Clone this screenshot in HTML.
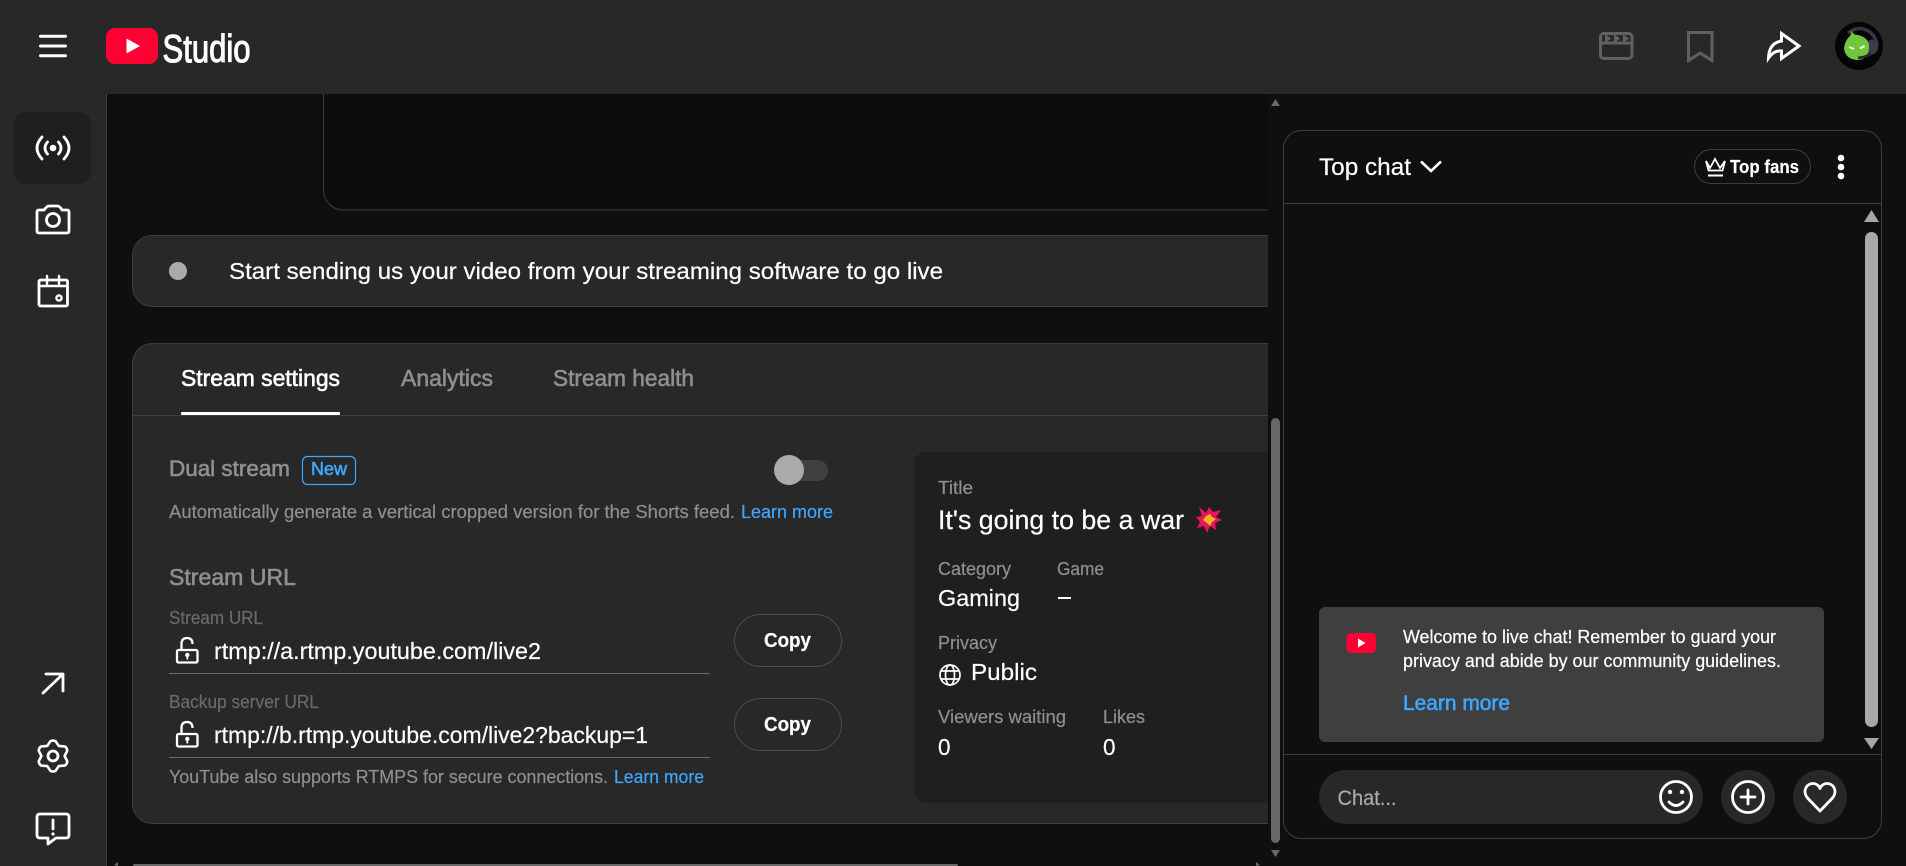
<!DOCTYPE html>
<html lang="en"><head><meta charset="utf-8"><title>YouTube Studio</title>
<style>
html,body{margin:0;padding:0;width:1906px;height:866px;overflow:hidden;background:#0f0f0f}
svg{display:block;position:absolute;left:0;top:0}
text{font-family:"Liberation Sans",sans-serif;white-space:pre;stroke-width:.2px}
.w{fill:#fff;stroke:#fff}.g{fill:#aaa;stroke:#aaa}.d{fill:#8f8f8f;stroke:#8f8f8f}.f{fill:#6a6a6a;stroke:#6a6a6a}.b{fill:#3ea6ff;stroke:#3ea6ff}
text.m{stroke-width:.6px}
.i{fill:none;stroke:#fff;stroke-width:2.8;stroke-linecap:round;stroke-linejoin:round}
</style></head><body>
<svg width="1906" height="866" viewBox="0 0 1906 866" xmlns="http://www.w3.org/2000/svg">
<defs><clipPath id="c"><rect x="107" y="94" width="1161" height="772"/></clipPath></defs>
<rect width="1906" height="866" fill="#0f0f0f"/>

<g clip-path="url(#c)">
<rect x="323.500" y="40" width="1100" height="170" rx="20" fill="#0d0d0d" stroke="#3e3e3e" stroke-width="1"/>
<rect x="132.500" y="235.500" width="1300" height="71" rx="20" fill="#282828" stroke="#3e3e3e"/>
<circle cx="178" cy="271" r="9" fill="#aaa"/>
<text x="229" y="279" font-size="23" class="w" textLength="714" lengthAdjust="spacingAndGlyphs">Start sending us your video from your streaming software to go live</text>

<rect x="132.500" y="343.500" width="1300" height="480" rx="20" fill="#282828" stroke="#3e3e3e"/>
<rect x="133" y="415" width="1200" height="1" fill="#3e3e3e"/>
<text x="181" y="386" font-size="23" class="w m" textLength="159" lengthAdjust="spacingAndGlyphs">Stream settings</text>
<rect x="181" y="412" width="159" height="3" rx="1" fill="#fff"/>
<text x="401" y="386" font-size="23" class="d m" textLength="92" lengthAdjust="spacingAndGlyphs">Analytics</text>
<text x="553" y="386" font-size="23" class="d m" textLength="141" lengthAdjust="spacingAndGlyphs">Stream health</text>

<text x="169" y="476" font-size="22.500" class="d m" textLength="121" lengthAdjust="spacingAndGlyphs">Dual stream</text>
<rect x="302.500" y="456.500" width="53" height="28" rx="5" fill="none" stroke="#3ea6ff" stroke-width="1.200"/>
<text x="311" y="475" font-size="18.500" class="b m" textLength="36" lengthAdjust="spacingAndGlyphs">New</text>
<rect x="789" y="460" width="39" height="21" rx="10.500" fill="#404040"/>
<circle cx="789" cy="470" r="15" fill="#aaa"/>
<text x="169" y="518" font-size="18.200" class="d" textLength="566" lengthAdjust="spacingAndGlyphs">Automatically generate a vertical cropped version for the Shorts feed.</text>
<text x="741" y="518" font-size="18.200" class="b" textLength="92" lengthAdjust="spacingAndGlyphs">Learn more</text>

<text x="169" y="585" font-size="23.500" class="d m" textLength="127" lengthAdjust="spacingAndGlyphs">Stream URL</text>
<text x="169" y="624" font-size="18.200" class="f" textLength="94" lengthAdjust="spacingAndGlyphs">Stream URL</text>
<text x="214" y="659" font-size="23.500" class="w" textLength="327" lengthAdjust="spacingAndGlyphs">rtmp://a.rtmp.youtube.com/live2</text>
<rect x="169" y="673" width="541" height="1" fill="#6a6a6a"/>
<text x="169" y="708" font-size="18.200" class="f" textLength="150" lengthAdjust="spacingAndGlyphs">Backup server URL</text>
<text x="214" y="743" font-size="23.500" class="w" textLength="434" lengthAdjust="spacingAndGlyphs">rtmp://b.rtmp.youtube.com/live2?backup=1</text>
<rect x="169" y="757" width="541" height="1" fill="#6a6a6a"/>
<text x="169" y="783" font-size="18.200" class="d" textLength="439" lengthAdjust="spacingAndGlyphs">YouTube also supports RTMPS for secure connections.</text>
<text x="614" y="783" font-size="18.200" class="b" textLength="90" lengthAdjust="spacingAndGlyphs">Learn more</text>

<g fill="none" stroke="#fff" stroke-width="2.300">
<rect x="177" y="650" width="20.500" height="12.500" rx="1.500"/>
<path d="M181.500 650V644Q181.500 638 187 638Q192.500 638 192.500 644"/>
<circle cx="187.300" cy="655" r="1.700" fill="#fff" stroke-width="1"/><path d="M187.300 655V659.500" stroke-width="1.700"/>
</g>
<g fill="none" stroke="#fff" stroke-width="2.300" transform="translate(0,84)">
<rect x="177" y="650" width="20.500" height="12.500" rx="1.500"/>
<path d="M181.500 650V644Q181.500 638 187 638Q192.500 638 192.500 644"/>
<circle cx="187.300" cy="655" r="1.700" fill="#fff" stroke-width="1"/><path d="M187.300 655V659.500" stroke-width="1.700"/>
</g>

<rect x="734.500" y="614.500" width="107" height="52" rx="26" fill="none" stroke="#4d4d4d"/>
<text x="764" y="647" font-size="20" font-weight="700" class="w" textLength="47" lengthAdjust="spacingAndGlyphs">Copy</text>
<rect x="734.500" y="698.500" width="107" height="52" rx="26" fill="none" stroke="#4d4d4d"/>
<text x="764" y="731" font-size="20" font-weight="700" class="w" textLength="47" lengthAdjust="spacingAndGlyphs">Copy</text>

<rect x="914" y="452" width="500" height="351" rx="12" fill="#1f1f1f"/>
<text x="938" y="494" font-size="18.200" class="d" textLength="35" lengthAdjust="spacingAndGlyphs">Title</text>
<text x="938" y="529" font-size="27" class="w" textLength="246" lengthAdjust="spacingAndGlyphs">It's going to be a war</text>
<polygon points="1199,507 1206,513 1209,507 1213,512 1221,510 1216,517 1222,520 1215,523 1216,530 1210,526 1207,533 1204,526 1197,528 1200,522 1196,517 1202,516" fill="#e8145f"/>
<polygon points="1206,516 1210,514 1212,517 1216,519 1212,522 1210,526 1207,523 1203,520" fill="#f5b51e"/>
<text x="938" y="575" font-size="18.200" class="d" textLength="73" lengthAdjust="spacingAndGlyphs">Category</text>
<text x="1057" y="575" font-size="18.200" class="d" textLength="47" lengthAdjust="spacingAndGlyphs">Game</text>
<text x="938" y="606" font-size="23.500" class="w" textLength="82" lengthAdjust="spacingAndGlyphs">Gaming</text>
<rect x="1058" y="597" width="13" height="2" fill="#fff"/>
<text x="938" y="649" font-size="18.200" class="d" textLength="59" lengthAdjust="spacingAndGlyphs">Privacy</text>
<g fill="none" stroke="#fff" stroke-width="1.700"><circle cx="950" cy="675" r="10"/><ellipse cx="950" cy="675" rx="4.500" ry="10"/><path d="M941.500 671H958.500M941.500 679H958.500"/></g>
<text x="971" y="680" font-size="23.500" class="w" textLength="66" lengthAdjust="spacingAndGlyphs">Public</text>
<text x="938" y="723" font-size="18.200" class="d" textLength="128" lengthAdjust="spacingAndGlyphs">Viewers waiting</text>
<text x="1103" y="723" font-size="18.200" class="d" textLength="42" lengthAdjust="spacingAndGlyphs">Likes</text>
<text x="938" y="755" font-size="23.500" class="w" textLength="12.500" lengthAdjust="spacingAndGlyphs">0</text>
<text x="1103" y="755" font-size="23.500" class="w" textLength="12.500" lengthAdjust="spacingAndGlyphs">0</text>
</g>

<!-- main scrollbars -->
<polygon points="1275.500,99 1280,106 1271,106" fill="#686868"/>
<rect x="1271" y="418" width="9" height="425" rx="4.500" fill="#686868"/>
<polygon points="1275.500,857 1280,850 1271,850" fill="#686868"/>
<rect x="133" y="864" width="825" height="2" rx="1" fill="#686868"/>
<polygon points="114,865 118,862 118,866" fill="#686868"/>
<polygon points="1260,865 1256,862 1256,866" fill="#686868"/>

<!-- sidebar -->
<rect x="0" y="94" width="106" height="772" fill="#282828"/>
<rect x="106" y="94" width="1" height="772" fill="#3e3e3e"/>
<rect x="14" y="112" width="77" height="72" rx="12" fill="#1f1f1f"/>
<g class="i">
<path d="M42 137Q32 148 42 159M64 137Q74 148 64 159M47.500 142Q42.500 148 47.500 154M58.500 142Q63.500 148 58.500 154"/>
<circle cx="53" cy="148" r="3.300" fill="#fff" stroke="none"/>
<path d="M39 210H44Q47 206 49 206H57Q60 206 62 210H67Q69 210 69 212V231Q69 233 67 233H39Q37 233 37 231V212Q37 210 39 210Z"/>
<circle cx="53" cy="220" r="6.500"/>
<rect x="39" y="280" width="28.500" height="26" rx="1.500"/>
<path d="M39 286H67M47 276V284M59 276V284" stroke-width="2.400"/>
<circle cx="59" cy="298" r="2.600" stroke-width="2.400"/>
<path d="M43 693L63 674M46 674H63V691"/>
<path transform="translate(53,756) scale(.93)" d="M-2.900-15.800Q0-17.500 2.900-15.800L6.200-10.800L12.600-10.300Q15.200-8.750 15.300-5.600L12.500 0L15.300 5.600Q15.200 8.750 12.600 10.300L6.200 10.800L2.900 15.800Q0 17.500-2.900 15.800L-6.200 10.800L-12.600 10.300Q-15.200 8.750-15.300 5.600L-12.500 0L-15.300-5.600Q-15.200-8.750-12.600-10.300L-6.200-10.800Z"/>
<circle cx="53" cy="756" r="5"/>
<path d="M40 814H66Q69 814 69 817V835Q69 838 66 838H56L48 844V838H40Q37 838 37 835V817Q37 814 40 814Z"/>
<path d="M53 820V829"/><circle cx="53" cy="834" r="1.600" fill="#fff" stroke="none"/>
</g>

<!-- header -->
<rect width="1906" height="94" fill="#282828"/>
<path d="M40.500 36.300H65.500M40.500 46H65.500M40.500 55.700H65.500" class="i" style="stroke-width:3"/>
<rect x="106" y="28" width="52" height="36" rx="9" fill="#ff0033"/>
<polygon points="126.500,38.500 140,46 126.500,53.500" fill="#fff"/>
<text x="162.500" y="62" font-size="39" class="w" style="stroke-width:1.100px" textLength="88" lengthAdjust="spacingAndGlyphs">Studio</text>

<g fill="none" stroke="#606060" stroke-width="3" stroke-linejoin="round">
<rect x="1600.500" y="33.500" width="31.500" height="25" rx="3.500"/>
<path d="M1600.500 43H1632"/>
<path d="M1688.500 32.500H1712V60.500L1700.200 53L1688.500 60.500Z" stroke-linejoin="miter"/>
</g>
<g fill="#606060"><polygon points="1605,34 1611,38.500 1605,43"/><polygon points="1614,34 1620,38.500 1614,43"/><polygon points="1623,34 1629,38.500 1623,43"/></g>
<path d="M1781.500 33.500L1799 46L1781.500 58.500V51Q1774 50 1768.500 58Q1769 43 1781.500 41Z" fill="none" stroke="#fff" stroke-width="3" stroke-linejoin="miter"/>

<circle cx="1859" cy="46" r="24" fill="#050505"/>
<path d="M1848 33Q1860 24 1871 33Q1877 39 1877 46" fill="none" stroke="#3a3344" stroke-width="3.500"/>
<ellipse cx="1872" cy="47" rx="6" ry="7.500" fill="#40384c"/>
<path d="M1851 30Q1853 35 1858 35Q1870 38 1869 48Q1868 60 1857 60Q1845 59 1844 48Q1845 41 1849 37Q1852 34 1851 30Z" fill="#72c63c"/>
<path d="M1849 47L1854 49M1864.500 46L1860 48.500" stroke="#fff" stroke-width="2"/>
<path d="M1871 54Q1866 57 1858 58" stroke="#2a2530" stroke-width="2.600" fill="none"/>

<!-- chat panel -->
<rect x="1283.500" y="130.500" width="598" height="708" rx="18" fill="#0f0f0f" stroke="#3e3e3e"/>
<rect x="1284" y="203" width="597" height="1" fill="#3e3e3e"/>
<rect x="1284" y="754" width="597" height="1" fill="#3e3e3e"/>
<text x="1319" y="175" font-size="24" class="w" textLength="92" lengthAdjust="spacingAndGlyphs">Top chat</text>
<path d="M1421 161.500L1431 171L1441 161.500" fill="none" stroke="#fff" stroke-width="2.600"/>
<rect x="1694.500" y="149.500" width="116" height="34" rx="17" fill="none" stroke="#3e3e3e"/>
<path d="M1706 161L1710 168L1715 159L1720 168L1725 161L1722.500 170.500H1708.500Z" fill="none" stroke="#fff" stroke-width="1.800" stroke-linejoin="miter"/>
<path d="M1708 175.500H1723" stroke="#fff" stroke-width="2"/>
<text x="1730" y="173" font-size="18" font-weight="700" class="w" textLength="69" lengthAdjust="spacingAndGlyphs">Top fans</text>
<circle cx="1841" cy="158" r="3.300" fill="#fff"/><circle cx="1841" cy="167" r="3.300" fill="#fff"/><circle cx="1841" cy="176" r="3.300" fill="#fff"/>

<polygon points="1871.500,210 1879,222 1864,222" fill="#a8a8a8"/>
<rect x="1865" y="232" width="13" height="495" rx="6.500" fill="#a8a8a8"/>
<polygon points="1871.500,749 1879,738 1864,738" fill="#a8a8a8"/>

<rect x="1319" y="607" width="505" height="135" rx="6" fill="#3f3f3f"/>
<rect x="1346.500" y="633" width="29.500" height="20" rx="4.500" fill="#ff0033"/>
<polygon points="1358,638.500 1365.500,643 1358,647.500" fill="#fff"/>
<text x="1403" y="643" font-size="18" class="w" textLength="373" lengthAdjust="spacingAndGlyphs">Welcome to live chat! Remember to guard your</text>
<text x="1403" y="667" font-size="18" class="w" textLength="378" lengthAdjust="spacingAndGlyphs">privacy and abide by our community guidelines.</text>
<text x="1403" y="710" font-size="21" class="b m" textLength="107" lengthAdjust="spacingAndGlyphs">Learn more</text>

<rect x="1319" y="770" width="384" height="54" rx="27" fill="#282828"/>
<text x="1337.500" y="805" font-size="21" class="g" textLength="59" lengthAdjust="spacingAndGlyphs">Chat...</text>
<circle cx="1676" cy="797" r="15.500" class="i"/>
<circle cx="1670" cy="792" r="2.200" fill="#fff"/><circle cx="1682" cy="792" r="2.200" fill="#fff"/>
<path d="M1669 802Q1676 809 1683 802" class="i"/>
<circle cx="1748" cy="797" r="27" fill="#282828"/>
<circle cx="1748" cy="797" r="15.500" class="i"/>
<path d="M1748 790V804M1741 797H1755" class="i"/>
<circle cx="1820" cy="797" r="27" fill="#282828"/>
<path d="M1820 811L1807.500 798C1802 791 1806.500 783.500 1813 783.500C1816 783.500 1819 785.500 1820 788.500C1821 785.500 1824 783.500 1827 783.500C1833.500 783.500 1838 791 1832.500 798Z" class="i"/>
</svg>
</body></html>
